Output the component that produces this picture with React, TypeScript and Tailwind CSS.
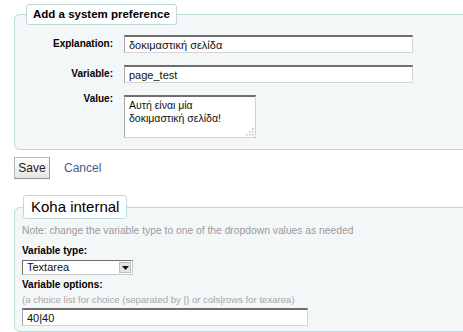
const inputCls =
  "block h-[18px] bg-white border border-t-2 border-t-[#6e6e6e] border-l-[#a8a8a8] border-r-[#d4d4d4] border-b-[#d4d4d4] px-[4px] text-[11px] text-[#111] outline-none";

function Row({ label, children, top }: { label: string; children: React.ReactNode; top?: boolean }) {
  return (
    <div className={top ? "flex items-start" : "flex items-center"}>
      <div className={"w-[98px] text-right text-[10px] font-bold leading-[14px] text-black" + (top ? " -mt-[3px]" : "")}>
        {label}
      </div>
      <div className="ml-[11px] flex">{children}</div>
    </div>
  );
}

export default function App() {
  return (
    <div className="w-[463px] h-[332px] overflow-hidden bg-white font-['Liberation_Sans',Arial,sans-serif]">
      {/* Add a system preference */}
      <fieldset className="ml-[14px] mt-[4px] w-[470px] border border-[#bcdadb] rounded-l-[6px] bg-[#f4f7f8] pb-[11px]">
        <legend className="ml-[11px] px-[6px] border border-[#bcdadb] rounded-[3px] bg-white text-[11.5px] font-bold leading-[19px] text-black">
          Add a system preference
        </legend>
        <div className="pt-[10px] flex flex-col gap-[12px]">
          <Row label="Explanation:">
            <input readOnly value="δοκιμαστική σελίδα" className={inputCls + " w-[289px] text-[10.5px]"} />
          </Row>
          <Row label="Variable:">
            <input readOnly value="page_test" className={inputCls + " w-[289px] h-[17px]"} />
          </Row>
          <Row label="Value:" top>
            <div className="relative">
              <textarea
                readOnly
                value={"Αυτή είναι μία\nδοκιμαστική σελίδα!"}
                className="block w-[132px] h-[43px] resize-none bg-white border border-t-2 border-t-[#6e6e6e] border-l-[#a8a8a8] border-r-[#d4d4d4] border-b-[#d4d4d4] px-[4px] pt-[2px] text-[10.5px] leading-[13px] text-[#111] outline-none overflow-hidden"
              />
              <svg className="absolute right-[2px] bottom-[2px]" width="8" height="8" viewBox="0 0 8 8">
                <g fill="#bdbdbd">
                  <rect x="6" y="0" width="1.5" height="1.5" />
                  <rect x="3" y="3" width="1.5" height="1.5" />
                  <rect x="6" y="3" width="1.5" height="1.5" />
                  <rect x="0" y="6" width="1.5" height="1.5" />
                  <rect x="3" y="6" width="1.5" height="1.5" />
                  <rect x="6" y="6" width="1.5" height="1.5" />
                </g>
              </svg>
            </div>
          </Row>
        </div>
      </fieldset>

      <div className="ml-[14px] mt-[7px] flex items-center">
        <button className="w-[36px] h-[22px] border border-[#b5b5b5] border-b-[#8f8f8f] border-r-[#9a9a9a] bg-gradient-to-b from-white to-[#e6e6e6] text-[12px] text-[#222] leading-[20px]">
          Save
        </button>
        <a className="ml-[14px] text-[12px] leading-[14px] text-[#3f6088] cursor-pointer">Cancel</a>
      </div>

      {/* Koha internal */}
      <fieldset className="ml-[14px] mt-[16px] w-[470px] border border-[#bcdadb] rounded-l-[6px] bg-[#f4f7f8] pl-[7px] pb-[5px]">
        <legend className="ml-[1px] px-[7px] border border-[#bcdadb] rounded-[3px] bg-white text-[15px] leading-[22px] text-black">
          Koha internal
        </legend>
        <div className="mt-[5px] text-[10.3px] leading-[13px] text-[#9a9a9a]">
          Note: change the variable type to one of the dropdown values as needed
        </div>
        <div className="mt-[7px] text-[10px] font-bold leading-[13px] text-black">Variable type:</div>
        <div className="mt-[3px] w-[111px] h-[15px] flex items-stretch bg-white border border-t-[#6e6e6e] border-l-[#6e6e6e] border-r-[#c8c8c8] border-b-[#c8c8c8]">
          <span className="flex-1 pl-[4px] text-[11px] leading-[13px] text-[#111]">Textarea</span>
          <span className="w-[12px] m-[1px] flex items-center justify-center bg-[#e4e4e4] border border-[#bdbdbd]">
            <svg width="7" height="4" viewBox="0 0 7 4">
              <path d="M0 0h7L3.5 4z" fill="#111" />
            </svg>
          </span>
        </div>
        <div className="mt-[3px] text-[10px] font-bold leading-[13px] text-black">Variable options:</div>
        <div className="mt-[2px] text-[9.6px] leading-[13px] text-[#a6a6a6]">
          (a choice list for choice (separated by |) or cols|rows for texarea)
        </div>
        <input readOnly value="40|40" className={inputCls + " mt-[2px] w-[286px] h-[17px]"} />
      </fieldset>
    </div>
  );
}
